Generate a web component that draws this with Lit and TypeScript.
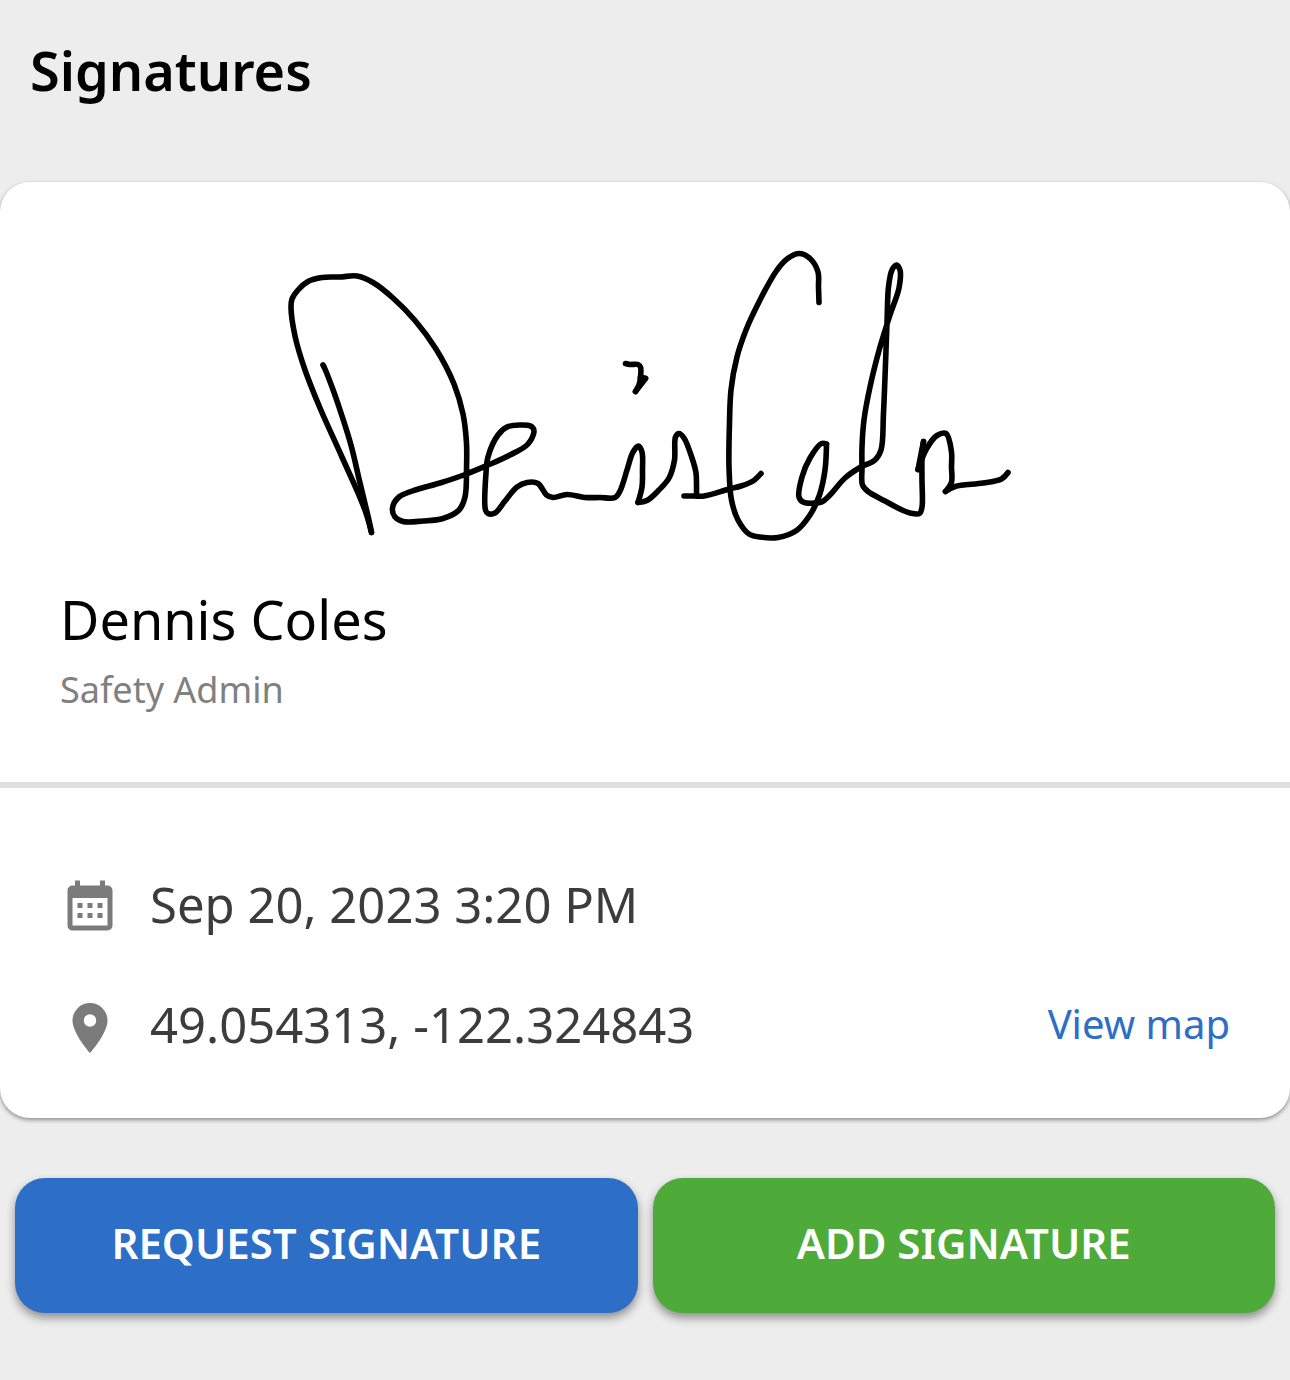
import { LitElement, html, css, svg } from "lit";
import { customElement, property } from "lit/decorators.js";

type Point = [number, number];

/* Pen strokes of the signature; each list runs between two sharp turns. */
const STROKES: Point[][] = [
  [[323, 365], [325, 369], [333.5, 391], [342, 416], [351.5, 447], [360, 483], [368, 516], [371.5, 532.5]],
  [
    [371.5, 532.5], [366, 513], [358.5, 494], [341.5, 456], [320, 408], [305, 370], [295, 336], [291, 307],
    [292, 299], [298, 290], [308, 281.5], [322, 277.5], [340, 277], [357, 276], [373, 282.5], [393, 298],
    [415, 320.5], [436, 349], [454, 384], [463, 414], [466.5, 443], [466.5, 470], [465, 497], [459, 510],
    [443, 518.5], [423, 521], [403, 521.5], [395, 517], [392.5, 508], [399, 497], [417, 489.5], [440, 483],
    [466.5, 474], [487, 465.5], [510, 455], [528, 444], [534, 430.5], [530.5, 426], [520, 425], [507, 427],
    [498, 435], [488, 457], [486, 473], [485.5, 510], [488, 513.5], [495, 513], [505, 501], [517, 487],
    [527, 482.5], [538, 483.5], [546.5, 495], [553, 497.5], [567, 494.5], [585, 497.5], [600, 497.5],
    [615, 497.5], [620, 491], [627, 470], [633, 452], [638.5, 446], [642, 452], [642.5, 470], [642, 487],
    [638, 502.5],
  ],
  [
    [638, 502.5], [647, 500.5], [658, 491], [669, 478], [674.5, 460], [675.5, 437], [679, 433.5], [684, 438],
    [692, 458], [696, 473], [696.5, 484], [696.5, 495.5],
  ],
  [[684, 496], [694, 496], [704, 496], [729, 489], [741, 486], [753, 481], [761, 473.5]],
  [[625.5, 363.5], [630, 364.5], [638, 364.5], [640.5, 367], [640.5, 377], [639, 385], [635.5, 391.5]],
  [[635.5, 391.5], [645.5, 378.5]],
  [[645.5, 378.5], [640.5, 377]],
  [
    [819, 302.5], [818.5, 287], [818, 272], [810, 258.5], [799, 253.5], [787, 259], [776, 271.5], [760, 300],
    [746, 330], [737, 357], [731, 390], [729.5, 423], [729, 467], [731.5, 500], [738, 520], [749, 534],
    [760, 537], [778, 537.5], [796.5, 530.5], [810, 515], [819.5, 495], [825, 470], [826.5, 444],
  ],
  [
    [826.5, 444], [821.5, 443.5], [810, 458], [802, 477], [799, 497], [803, 502], [821.5, 502], [830, 495],
    [845, 478], [860, 467.5], [875, 460], [881, 450], [883.5, 413], [887, 323], [888.5, 287], [892, 270],
    [896.5, 265], [900, 270], [899, 288], [890, 315], [880, 347], [870, 387], [864, 420], [862, 447],
    [862, 468], [862.5, 485], [868, 491.5], [885, 501], [902, 510], [910, 513], [919.5, 513.5], [922, 507],
    [922, 480], [922, 457], [923.5, 441.5],
  ],
  [[923.5, 441.5], [918, 469.5]],
  [[918, 469.5], [927, 448], [937, 435.5], [946, 433.5], [951.5, 452], [951.5, 467], [951.5, 482], [945.5, 491.5]],
  [[945.5, 491.5], [955, 486.5], [983, 483], [1001.5, 479], [1008, 472.5]],
];

/* Centripetal Catmull-Rom spline through the points, written as cubic Béziers. */
function smoothPath(points: Point[]): string {
  const span = (a: Point, b: Point) => Math.sqrt(Math.hypot(b[0] - a[0], b[1] - a[1]));
  let d = `M${points[0][0]} ${points[0][1]}`;
  for (let i = 0; i < points.length - 1; i++) {
    const p1 = points[i];
    const p2 = points[i + 1];
    const p0 = points[i - 1] ?? p1;
    const p3 = points[i + 2] ?? p2;
    const a = span(p0, p1);
    const b = span(p1, p2);
    const c = span(p2, p3);
    const lead = (k: 0 | 1) =>
      a === 0 ? p1[k] : (a * a * p2[k] - b * b * p0[k] + (2 * a * a + 3 * a * b + b * b) * p1[k]) / (3 * a * (a + b));
    const trail = (k: 0 | 1) =>
      c === 0 ? p2[k] : (c * c * p1[k] - b * b * p3[k] + (2 * c * c + 3 * c * b + b * b) * p2[k]) / (3 * c * (c + b));
    const n = (v: number) => v.toFixed(1);
    d += `C${n(lead(0))} ${n(lead(1))} ${n(trail(0))} ${n(trail(1))} ${p2[0]} ${p2[1]}`;
  }
  return d;
}

const CALENDAR =
  "M9,10V12H7V10H9M13,10V12H11V10H13M17,10V12H15V10H17M19,3A2,2 0 0,1 21,5V19A2,2 0 0,1 19,21H5C3.89,21 3,20.1 3,19V5A2,2 0 0,1 5,3H6V1H8V3H16V1H18V3H19M19,19V8H5V19H19M9,14V16H7V14H9M13,14V16H11V14H13M17,14V16H15V14H17Z";
const MARKER =
  "M12,11.5A2.5,2.5 0 0,1 9.5,9A2.5,2.5 0 0,1 12,6.5A2.5,2.5 0 0,1 14.5,9A2.5,2.5 0 0,1 12,11.5M12,2A7,7 0 0,0 5,9C5,14.25 12,22 12,22C12,22 19,14.25 19,9A7,7 0 0,0 12,2Z";

@customElement("signature-card")
export class SignatureCard extends LitElement {
  @property() name = "";
  @property() jobTitle = "";
  @property() date = "";
  @property() coordinates = "";

  static styles = css`
    :host {
      display: block;
      background: #fff;
      border-radius: 30px;
      box-shadow: 0 2px 4px rgba(0, 0, 0, 0.4);
    }
    .signer {
      padding: 58px 60px 67px;
      border-bottom: 6px solid #dfdfdf;
    }
    .ink {
      display: block;
      width: 100%;
      height: 310px;
      fill: none;
      stroke: #000;
      stroke-width: 5.6;
      stroke-linecap: round;
      stroke-linejoin: round;
    }
    .name {
      margin: 31px 0 0;
      font-size: 54px;
      font-weight: 400;
      line-height: 76px;
      color: #000;
    }
    .role {
      margin: 8px 0 0;
      font-size: 36px;
      line-height: 50px;
      color: #808080;
    }
    .details {
      display: flex;
      flex-direction: column;
      gap: 60px;
      padding: 90px 60px 60px;
    }
    .row {
      display: flex;
      align-items: center;
      gap: 30px;
      height: 60px;
      font-size: 49px;
      line-height: 52px;
      color: #3c3c3c;
    }
    .row > * {
      padding-bottom: 8px;
    }
    .row > .icon {
      flex: none;
      width: 60px;
      height: 60px;
      padding: 0;
      fill: #7b7b7b;
    }
    .map {
      margin-left: auto;
      font-size: 40px;
      color: #2d6ec6;
      text-decoration: none;
    }
  `;

  render() {
    return html`
      <section class="signer">
        <svg class="ink" viewBox="280 240 730 310" role="img" aria-label=${this.name}>
          ${STROKES.map((points) => svg`<path d=${smoothPath(points)}></path>`)}
        </svg>
        <h2 class="name">${this.name}</h2>
        <p class="role">${this.jobTitle}</p>
      </section>
      <section class="details">
        <div class="row">
          <svg class="icon" viewBox="0 0 24 24" aria-hidden="true"><path d=${CALENDAR}></path></svg>
          <span>${this.date}</span>
        </div>
        <div class="row">
          <svg class="icon" viewBox="0 0 24 24" aria-hidden="true"><path d=${MARKER}></path></svg>
          <span>${this.coordinates}</span>
          <a class="map" href="#map">View map</a>
        </div>
      </section>
    `;
  }
}

@customElement("app-root")
export class AppRoot extends LitElement {
  static styles = css`
    :host {
      display: block;
      box-sizing: border-box;
      min-height: 100vh;
      background: #ededed;
      font-family: "Noto Sans", "Open Sans", sans-serif;
    }
    .title {
      margin: 0;
      padding: 32px 30px 74px;
      font-size: 54px;
      font-weight: 600;
      line-height: 76px;
      color: #000;
    }
    .actions {
      display: grid;
      grid-template-columns: 1fr 1fr;
      gap: 15px;
      padding: 60px 15px;
    }
    .button {
      height: 135px;
      padding: 0 0 6px;
      border: 0;
      border-radius: 30px;
      box-shadow: 0 5px 10px rgba(0, 0, 0, 0.4);
      font: inherit;
      font-size: 42px;
      font-weight: 600;
      color: #fff;
      cursor: pointer;
    }
    .request {
      background: #2d6ec6;
    }
    .add {
      background: #4eaa39;
    }
  `;

  render() {
    return html`
      <h1 class="title">Signatures</h1>
      <signature-card
        .name=${"Dennis Coles"}
        .jobTitle=${"Safety Admin"}
        .date=${"Sep 20, 2023 3:20 PM"}
        .coordinates=${"49.054313, -122.324843"}
      ></signature-card>
      <div class="actions">
        <button class="button request" type="button">REQUEST SIGNATURE</button>
        <button class="button add" type="button">ADD SIGNATURE</button>
      </div>
    `;
  }
}
